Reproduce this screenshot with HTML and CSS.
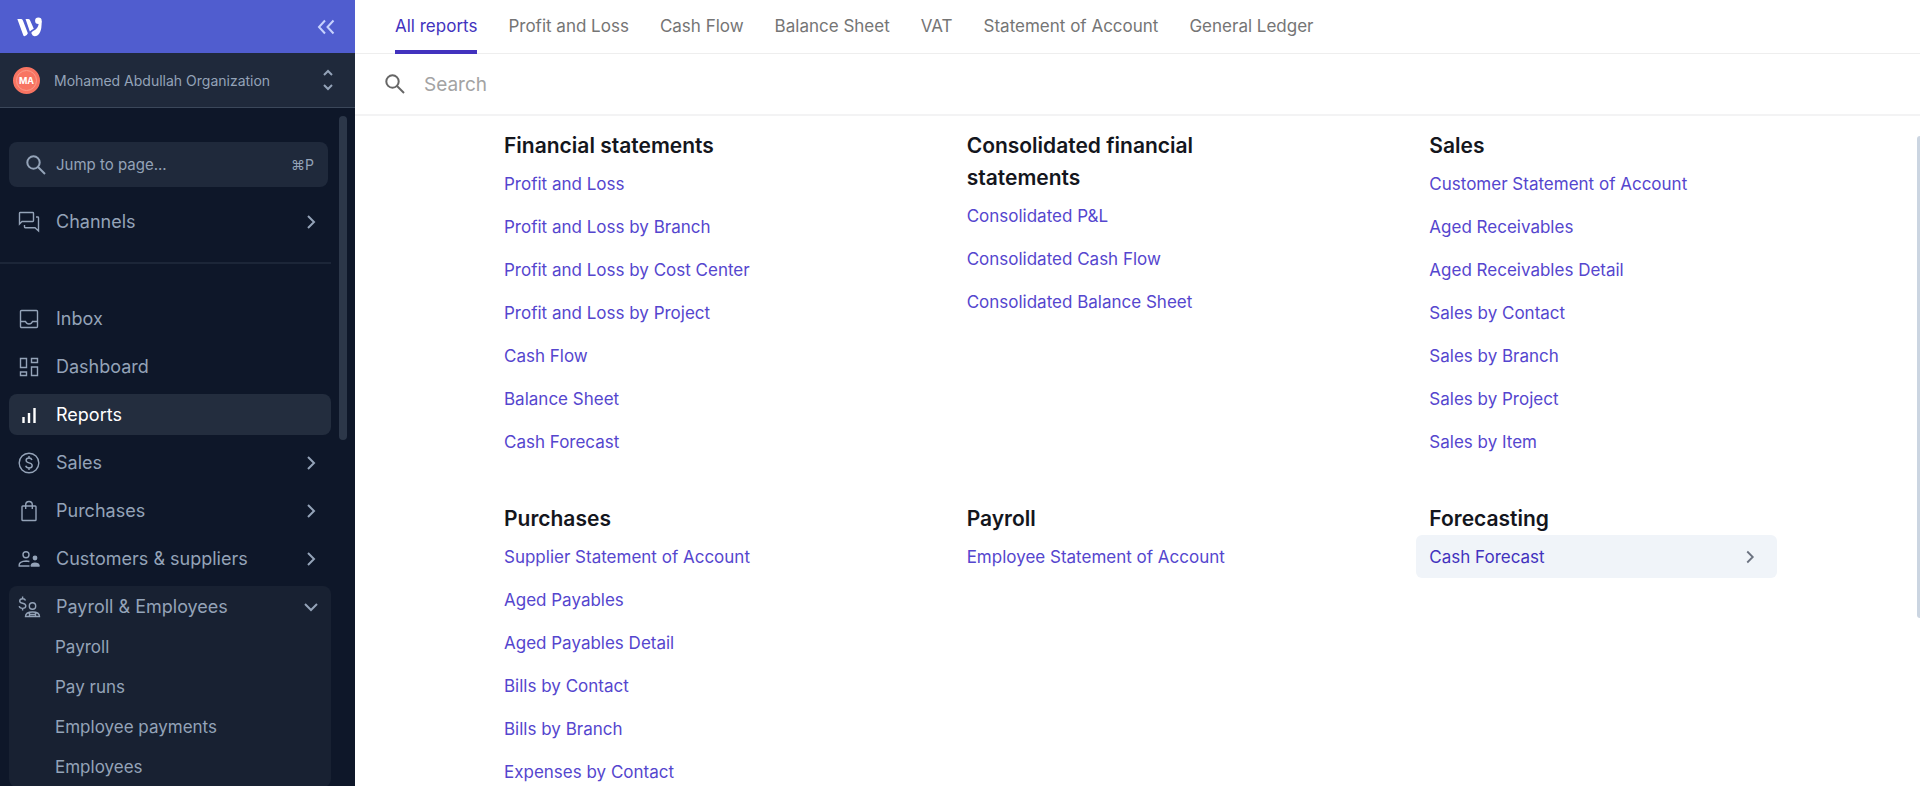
FILE: index.html
```html
<!DOCTYPE html>
<html lang="en">
<head>
    <meta charset="utf-8">
    <title>All reports</title>
    <link rel="stylesheet" href="styles.css">
</head>
<body>
    <!-- icons used more than once -->
    <svg class="sprite" aria-hidden="true">
        <symbol id="chevron" viewBox="0 0 24 24"><path d="M9 6l6 6-6 6"/></symbol>
        <symbol id="search" viewBox="0 0 24 24"><circle cx="9.5" cy="9.500" r="6.2"/><path d="M14 14l7 7"/></symbol>
    </svg>

    <aside class="sidebar">
        <div class="brand">
            <a href="#" aria-label="Home">
                <svg class="logo" viewBox="0 0 76 60">
                    <path d="M1 6h11q4 0 6 4l15 39q-3 9-10 9-3 0-4-3z"/>
                    <path d="M26 6h8q4 0 6 4l11 25q-7 3-12 9z"/>
                    <circle cx="65" cy="11" r="10"/>
                    <path d="M75 11q1 47-22 47-6 0-9-8-2-5 5-8 15-6 17-22z"/>
                </svg>
            </a>
            <button class="icon-btn" aria-label="Collapse menu">
                <svg class="icon" viewBox="0 0 24 24"><path d="M11 5.5L5 12l6 6.500M19.500 5.500l-6 6.500 6 6.500"/></svg>
            </button>
        </div>

        <button class="org">
            <span class="avatar">MA</span>
            <span class="org-name">Mohamed Abdullah Organization</span>
            <svg class="icon" viewBox="0 0 24 24"><path d="M8 7l4-4 4 4M8 17l4 4 4-4"/></svg>
        </button>

        <div class="sidebar-body">
            <button class="jump">
                <svg class="icon"><use href="#search"/></svg>
                <span class="label">Jump to page...</span>
                <kbd>⌘P</kbd>
            </button>

            <nav class="channels">
                <a class="item" href="#">
                    <svg class="icon thin" viewBox="0 0 24 24"><path d="M2.500 14V3.200q0-.7.7-.7h12.600q.7 0 .7.7v7.600q0 .7-.7.7H5zM19 7h1.800q.7 0 .7.7V21l-3.500-3.300H8.200q-.7 0-.7-.7v-2"/></svg>
                    <span class="label">Channels</span>
                    <svg class="icon chevron"><use href="#chevron"/></svg>
                </a>
            </nav>

            <nav class="menu">
                <a class="item" href="#">
                    <svg class="icon thin" viewBox="0 0 24 24"><rect x="3.500" y="3.500" width="17" height="17" rx="1"/><path d="M3.500 14.500h5q1 2.500 3.500 2.500t3.500-2.500h5"/></svg>
                    <span class="label">Inbox</span>
                </a>
                <a class="item" href="#">
                    <svg class="icon thin" viewBox="0 0 24 24"><path d="M3.500 3.500h6v9h-6zM14.500 3.500h6v4h-6zM3.500 17h6v3.500h-6zM14.500 12h6v8.500h-6z"/></svg>
                    <span class="label">Dashboard</span>
                </a>
                <a class="item active" href="#" aria-current="page">
                    <svg class="icon bars" viewBox="0 0 24 24"><path d="M6.500 14v6M12 10v10M17.500 5v15"/></svg>
                    <span class="label">Reports</span>
                </a>
                <a class="item" href="#">
                    <svg class="icon thin" viewBox="0 0 24 24"><circle cx="12" cy="12" r="9.8"/><path d="M15 9q-.7-2-3-2-2.900 0-2.900 2.300 0 1.900 2.900 2.600 3.200.7 3.200 2.800T12 17q-2.600 0-3.300-2.200M12 5v2M12 17v2"/></svg>
                    <span class="label">Sales</span>
                    <svg class="icon chevron"><use href="#chevron"/></svg>
                </a>
                <a class="item" href="#">
                    <svg class="icon thin" viewBox="0 0 24 24"><path d="M5.800 7h12.400q.8 0 .8.800v12.900q0 .8-.8.800H5.800q-.8 0-.8-.8V7.800q0-.8.800-.8zM8.700 10V6q0-3.500 3.300-3.500T15.300 6v4"/></svg>
                    <span class="label">Purchases</span>
                    <svg class="icon chevron"><use href="#chevron"/></svg>
                </a>
                <a class="item" href="#">
                    <svg class="icon thin" viewBox="0 0 24 24"><circle cx="9" cy="7.8" r="3"/><path d="M12.500 19H2.200v-1.200q0-3.300 7-3.800 1.800 0 3.200.5"/><circle class="solid" cx="18" cy="11" r="2.400"/><path class="solid" d="M13.700 19.700v-1.500q.4-2.500 4.200-2.700 4.200.2 4.700 2.700v1.500z"/></svg>
                    <span class="label">Customers &amp; suppliers</span>
                    <svg class="icon chevron"><use href="#chevron"/></svg>
                </a>

                <div class="group">
                    <a class="item" href="#">
                        <svg class="icon thin" viewBox="0 0 24 24"><path d="M8.500 5.500Q8 3.700 5.500 3.700 2.700 3.700 2.700 6q0 1.800 2.900 2.300 3.200.6 3.200 2.800 0 2.300-3.200 2.300-2.900 0-3.400-2.200M5.600 1.500v2.200M5.600 13.400v2"/><circle cx="15.500" cy="11" r="3.200"/><path d="M8.500 21.500q0-4.500 7-4.500t7 4.500zM12.500 17.500v4M18.500 17.500v4M12.500 19.500h6"/></svg>
                        <span class="label">Payroll &amp; Employees</span>
                        <svg class="icon chevron open"><use href="#chevron"/></svg>
                    </a>
                    <a class="sub-item" href="#">Payroll</a>
                    <a class="sub-item" href="#">Pay runs</a>
                    <a class="sub-item" href="#">Employee payments</a>
                    <a class="sub-item" href="#">Employees</a>
                </div>
            </nav>
            <span class="sidebar-thumb"></span>
        </div>
    </aside>

    <main class="main">
        <nav class="tabs">
            <a class="tab selected" href="#">All reports</a>
            <a class="tab" href="#">Profit and Loss</a>
            <a class="tab" href="#">Cash Flow</a>
            <a class="tab" href="#">Balance Sheet</a>
            <a class="tab" href="#">VAT</a>
            <a class="tab" href="#">Statement of Account</a>
            <a class="tab" href="#">General Ledger</a>
        </nav>

        <label class="search">
            <svg class="icon"><use href="#search"/></svg>
            <input type="search" placeholder="Search" aria-label="Search">
        </label>

        <div class="content">
            <div class="reports">
                <section>
                    <h2>Financial statements</h2>
                    <a class="report" href="#">Profit and Loss</a>
                    <a class="report" href="#">Profit and Loss by Branch</a>
                    <a class="report" href="#">Profit and Loss by Cost Center</a>
                    <a class="report" href="#">Profit and Loss by Project</a>
                    <a class="report" href="#">Cash Flow</a>
                    <a class="report" href="#">Balance Sheet</a>
                    <a class="report" href="#">Cash Forecast</a>
                </section>
                <section>
                    <h2>Consolidated financial statements</h2>
                    <a class="report" href="#">Consolidated P&amp;L</a>
                    <a class="report" href="#">Consolidated Cash Flow</a>
                    <a class="report" href="#">Consolidated Balance Sheet</a>
                </section>
                <section>
                    <h2>Sales</h2>
                    <a class="report" href="#">Customer Statement of Account</a>
                    <a class="report" href="#">Aged Receivables</a>
                    <a class="report" href="#">Aged Receivables Detail</a>
                    <a class="report" href="#">Sales by Contact</a>
                    <a class="report" href="#">Sales by Branch</a>
                    <a class="report" href="#">Sales by Project</a>
                    <a class="report" href="#">Sales by Item</a>
                </section>
                <section>
                    <h2>Purchases</h2>
                    <a class="report" href="#">Supplier Statement of Account</a>
                    <a class="report" href="#">Aged Payables</a>
                    <a class="report" href="#">Aged Payables Detail</a>
                    <a class="report" href="#">Bills by Contact</a>
                    <a class="report" href="#">Bills by Branch</a>
                    <a class="report" href="#">Expenses by Contact</a>
                </section>
                <section>
                    <h2>Payroll</h2>
                    <a class="report" href="#">Employee Statement of Account</a>
                </section>
                <section>
                    <h2>Forecasting</h2>
                    <a class="report hovered" href="#">
                        Cash Forecast
                        <svg class="icon"><use href="#chevron"/></svg>
                    </a>
                </section>
            </div>
            <span class="content-thumb"></span>
        </div>
    </main>
</body>
</html>
```
FILE: styles.css
```css
* {
    box-sizing: border-box;
}

body {
    display: flex;
    height: 100vh;
    margin: 0;
    overflow: hidden;
    background-color: #fff;
    font-family: Inter, "Liberation Sans", sans-serif;
    font-size: 17px;
}

a {
    color: inherit;
    text-decoration: none;
}

button {
    border: none;
    background: none;
    color: inherit;
    font: inherit;
    cursor: pointer;
}

.sprite {
    display: none;
}

.icon {
    flex: none;
    width: 24px;
    height: 24px;
    fill: none;
    stroke: currentColor;
    stroke-width: 2;
}

.thin {
    stroke-width: 1.4;
}

.solid {
    fill: currentColor;
    stroke: none;
}

/* sidebar */
.sidebar {
    display: flex;
    flex: none;
    flex-direction: column;
    width: 355px;
    background-color: #0e1729;
    color: #94a3b8;
}

.brand {
    display: flex;
    flex: none;
    align-items: center;
    justify-content: space-between;
    height: 53px;
    padding: 0 17px;
    background-color: #505dcf;
}

.logo {
    display: block;
    width: 25px;
    height: 20px;
    fill: #fff;
}

.icon-btn {
    display: flex;
    padding: 0;
    color: #c7d2fe;
}

.org {
    display: flex;
    flex: none;
    align-items: center;
    height: 55px;
    padding: 0 15px 0 13px;
    border-bottom: 1px solid #3b475a;
    background-color: #1f293b;
    font-size: 14px;
    text-align: left;
}

.avatar {
    display: flex;
    align-items: center;
    justify-content: center;
    width: 27px;
    height: 27px;
    margin-right: 14px;
    border: 2px solid #f87462;
    border-radius: 50%;
    outline: 1px solid #fb9c8b;
    outline-offset: -4px;
    background-color: #f87462;
    color: #fff;
    font-size: 9px;
    font-weight: 700;
}

.org-name,
.label {
    flex: 1;
}

.sidebar-body {
    position: relative;
    flex: 1;
    min-height: 0;
    padding: 34px 24px 0 9px;
    overflow: hidden;
}

.jump {
    display: flex;
    align-items: center;
    width: 319px;
    height: 45px;
    padding: 0 14px 0 15px;
    border-radius: 8px;
    background-color: #1f293b;
    font-size: 15px;
    text-align: left;
}

.jump .icon {
    margin-right: 8px;
}

.jump kbd {
    font-family: inherit;
    font-size: 14px;
}

.channels {
    margin-left: -9px;
    padding: 14px 0 20px 9px;
    border-bottom: 2px solid #1c2638;
}

.menu {
    display: flex;
    flex-direction: column;
    gap: 7px;
    padding-top: 34px;
}

.item {
    display: flex;
    align-items: center;
    height: 41px;
    padding: 0 8px;
    border-radius: 8px;
    font-size: 18px;
}

.item .label {
    padding-left: 15px;
}

.item.active {
    background-color: #232d3e;
    color: #fff;
}

.bars {
    stroke-width: 2.4;
}

.chevron.open {
    transform: rotate(90deg);
}

.group {
    border-radius: 8px;
    background-color: #182132;
}

.sub-item {
    display: block;
    padding-left: 46px;
    font-size: 17px;
    line-height: 40px;
}

.sidebar-thumb {
    position: absolute;
    top: 8px;
    right: 8px;
    width: 8px;
    height: 324px;
    border-radius: 4px;
    background-color: #2c3749;
}

/* main area */
.main {
    display: flex;
    flex: 1;
    flex-direction: column;
    min-width: 0;
}

.tabs {
    display: flex;
    flex: none;
    gap: 31px;
    height: 54px;
    padding-left: 40px;
    border-bottom: 1px solid #eee;
    color: #757575;
}

.tab {
    height: 54px;
    border-bottom: 4px solid transparent;
    line-height: 53px;
}

.tab.selected {
    border-color: #4232be;
    color: #4232be;
}

.search {
    display: flex;
    flex: none;
    align-items: center;
    gap: 17px;
    height: 62px;
    padding: 0 28px;
    border-bottom: 2px solid #f3f3f4;
    color: #666;
}

.search input {
    flex: 1;
    padding: 0;
    border: none;
    outline: none;
    font: inherit;
    font-size: 19px;
}

.search input::placeholder {
    color: #a3a3a3;
}

.content {
    position: relative;
    flex: 1;
    min-height: 0;
    overflow: hidden;
}

.reports {
    display: grid;
    grid-template-columns: repeat(3, 1fr);
    gap: 40px 102px;
    padding: 14px 143px 0 136px;
}

h2 {
    margin: 0;
    padding: 0 13px;
    color: #14161d;
    font-size: 21px;
    font-weight: 600;
    line-height: 32px;
}

.report {
    display: flex;
    align-items: center;
    justify-content: space-between;
    height: 43px;
    padding: 0 16px 0 13px;
    border-radius: 6px;
    color: #5546ce;
}

.report.hovered {
    background-color: #f0f4f9;
    color: #4232be;
}

.report .icon {
    width: 22px;
    height: 22px;
    color: #6b7280;
}

.content-thumb {
    position: absolute;
    top: 20px;
    right: 0;
    width: 3px;
    height: 482px;
    border-radius: 3px 0 0 3px;
    background-color: #cbd5e1;
}
```
